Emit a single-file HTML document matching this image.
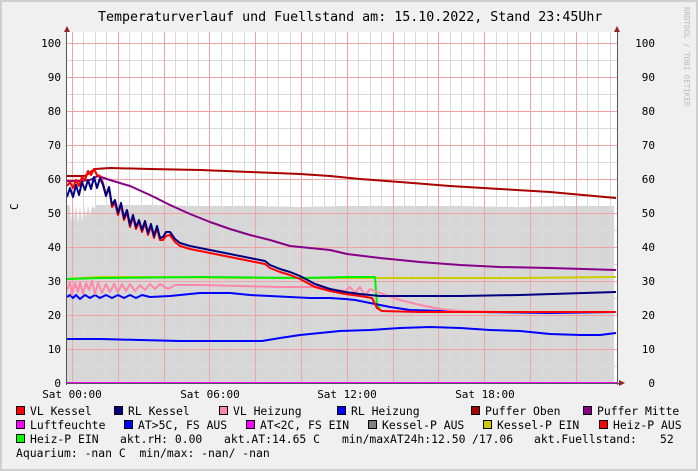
<!DOCTYPE html>
<html><head><meta charset="utf-8"><style>
html,body{margin:0;padding:0;background:#f0f0f0;}
svg{display:block;}
text{font-family:"DejaVu Sans Mono","Liberation Mono",monospace;white-space:pre;}
</style></head><body>
<svg width="698" height="471" viewBox="0 0 698 471" xmlns="http://www.w3.org/2000/svg">
<rect x="0" y="0" width="698" height="471" fill="#cfcfcf"/>
<rect x="2" y="2" width="694" height="467" fill="#f0f0f0"/>
<rect x="67" y="32" width="550" height="351" fill="#fff"/>
<path d="M67,383 L67,205 L70,205 L71,222 L73,205 L74,220 L76,205 L78,224 L80,206 L82,222 L84,204 L86,218 L88,205 L90,216 L92,206 L94,208 L96,205 L150,205 L200,206 L260,206 L300,207 L340,206 L400,206 L460,206 L520,207 L560,206 L614,206 L614,383 Z" fill="#d7d7d7"/>
<g stroke="#dadada" stroke-width="1" shape-rendering="crispEdges">
<path d="M83.5,32V383M95.5,32V383M106.5,32V383M129.5,32V383M141.5,32V383M152.5,32V383M175.5,32V383M187.5,32V383M198.5,32V383M221.5,32V383M232.5,32V383M244.5,32V383M267.5,32V383M278.5,32V383M290.5,32V383M312.5,32V383M324.5,32V383M335.5,32V383M358.5,32V383M370.5,32V383M381.5,32V383M404.5,32V383M415.5,32V383M427.5,32V383M450.5,32V383M461.5,32V383M473.5,32V383M496.5,32V383M507.5,32V383M518.5,32V383M541.5,32V383M553.5,32V383M564.5,32V383M587.5,32V383M598.5,32V383M610.5,32V383"/>
<path d="M67,60.5H617M67,94.5H617M67,128.5H617M67,162.5H617M67,196.5H617M67,230.5H617M67,264.5H617M67,298.5H617M67,332.5H617M67,366.5H617"/>
</g>
<g stroke="#f2a4a4" stroke-width="1" shape-rendering="crispEdges">
<path d="M72.5,32V383M118.5,32V383M164.5,32V383M209.5,32V383M255.5,32V383M301.5,32V383M347.5,32V383M393.5,32V383M438.5,32V383M484.5,32V383M530.5,32V383M576.5,32V383"/>
<path d="M67,43.5H617M67,77.5H617M67,111.5H617M67,145.5H617M67,179.5H617M67,213.5H617M67,247.5H617M67,281.5H617M67,315.5H617M67,349.5H617"/>
</g>
<g fill="none" stroke-width="2" stroke-linejoin="round">
<polyline stroke="#0000ff" points="67,339 100,339 140,340 180,341 220,341 262,341 280,338 300,335 320,333 340,331 370,330 400,328 430,327 460,328 490,330 520,331 550,334 580,335 600,335 616,333"/>
<polyline stroke="#cccc00" points="67,279 100,277 150,277 250,278 350,278 450,278 520,278 616,277"/>
<polyline stroke="#00ee00" points="67,279 100,278 200,277 300,278 350,277 375,277 377,306 380,308"/>
<polyline stroke="#0000ff" points="67,297 70,295 73,298 76,295 80,299 85,295 90,298 95,295 100,298 106,295 112,298 118,295 124,298 130,295 136,298 142,295 150,297 170,296 200,293 230,293 250,295 270,296 290,297 310,298 330,298 345,299 355,300 370,303 390,307 410,310 440,311 480,312 550,313 616,312"/>
<polyline stroke="#ff88aa" points="67,290 70,282 72,295 75,283 78,292 80,282 83,294 86,283 89,290 92,281 95,294 98,283 102,293 106,284 110,292 114,284 118,292 122,284 126,291 130,284 135,291 140,285 145,290 150,284 155,289 160,284 168,289 175,285 200,285 240,286 280,287 320,287 335,290 345,291 350,287 355,293 360,287 365,296 370,289 380,293 400,300 420,305 440,309 460,311 500,312 616,312"/>
<polyline stroke="#880088" points="67,181 80,181 90,180 98,176 110,180 130,186 150,195 170,205 190,214 210,222 230,229 250,235 270,240 290,246 310,248 330,250 347,254 380,258 420,262 460,265 500,267 550,268 616,270"/>
<polyline stroke="#aa0000" points="67,176 85,176 95,169 110,168 150,169 200,170 250,172 300,174 330,176 360,179 400,182 450,186 500,189 550,192 616,198"/>
<polyline stroke="#ff0000" points="67,186 70,182 73,188 76,180 79,186 82,177 85,180 88,171 91,175 94,169 97,175 100,176 103,183 106,195 109,188 112,207 115,203 118,215 121,205 124,220 127,212 130,227 133,217 136,229 139,222 142,232 145,223 148,235 151,226 154,238 157,228 160,240 163,240 166,236 170,235 175,242 180,246 190,249 200,251 215,254 230,257 245,260 255,262 265,264 270,268 280,272 290,275 300,279 315,287 330,291 345,294 360,296 372,298 377,308 382,311 420,312 500,312 616,312"/>
<polyline stroke="#000080" points="67,197 70,188 73,197 76,185 79,195 82,182 85,190 88,180 91,189 94,177 97,188 100,178 103,185 106,196 109,187 112,205 115,200 118,213 121,203 124,218 127,210 130,225 133,215 136,227 139,220 142,230 145,221 148,233 151,224 154,236 157,226 160,238 163,237 166,232 170,232 175,239 180,243 190,246 200,248 215,251 230,254 245,257 255,259 265,261 270,265 280,269 290,272 300,276 315,284 330,289 345,292 360,294 380,296 420,296 460,296 520,295 616,292"/>
</g>
<rect x="67" y="382" width="550" height="2" fill="#ff00ff"/>
<rect x="66" y="30" width="1" height="355" fill="#555"/>
<rect x="617" y="30" width="1" height="355" fill="#555"/>
<rect x="66" y="383" width="555" height="1" fill="#555"/>
<polygon points="67,26 64,32 70,32" fill="#992222"/>
<polygon points="617,26 614,32 620,32" fill="#992222"/>
<polygon points="625,383 619,380 619,386" fill="#992222"/>
<text x="98" y="21" font-size="13.3" fill="#000">Temperaturverlauf und Fuellstand am: 15.10.2022, Stand 23:45Uhr</text>
<text transform="translate(684,7) rotate(90)" font-size="7.5" fill="#bbb">RRDTOOL / TOBI OETIKER</text>
<text transform="translate(18,210) rotate(-90)" font-size="11" fill="#000">C</text>
<g font-size="11" fill="#000" text-anchor="end">
<text x="61" y="47">100</text><text x="61" y="81">90</text><text x="61" y="115">80</text><text x="61" y="149">70</text><text x="61" y="183">60</text><text x="61" y="217">50</text><text x="61" y="251">40</text><text x="61" y="285">30</text><text x="61" y="319">20</text><text x="61" y="353">10</text><text x="61" y="387">0</text>
<text x="655" y="47">100</text><text x="655" y="81">90</text><text x="655" y="115">80</text><text x="655" y="149">70</text><text x="655" y="183">60</text><text x="655" y="217">50</text><text x="655" y="251">40</text><text x="655" y="285">30</text><text x="655" y="319">20</text><text x="655" y="353">10</text><text x="655" y="387">0</text>
</g>
<g font-size="11" fill="#000" text-anchor="middle">
<text x="72" y="398">Sat 00:00</text><text x="210" y="398">Sat 06:00</text><text x="347" y="398">Sat 12:00</text><text x="485" y="398">Sat 18:00</text>
</g>
<g stroke="#000" stroke-width="1">
<rect x="16.5" y="406.5" width="8" height="8" fill="#ff0000"/>
<rect x="114.5" y="406.5" width="8" height="8" fill="#000080"/>
<rect x="219.5" y="406.5" width="8" height="8" fill="#ff88aa"/>
<rect x="337.5" y="406.5" width="8" height="8" fill="#0000ff"/>
<rect x="471.5" y="406.5" width="8" height="8" fill="#aa0000"/>
<rect x="583.5" y="406.5" width="8" height="8" fill="#880088"/>
<rect x="16.5" y="420.5" width="8" height="8" fill="#ff00ff"/>
<rect x="124.5" y="420.5" width="8" height="8" fill="#0000ff"/>
<rect x="246.5" y="420.5" width="8" height="8" fill="#ff00ff"/>
<rect x="368.5" y="420.5" width="8" height="8" fill="#808080"/>
<rect x="483.5" y="420.5" width="8" height="8" fill="#cccc00"/>
<rect x="599.5" y="420.5" width="8" height="8" fill="#ff0000"/>
<rect x="16.5" y="434.5" width="8" height="8" fill="#00ff00"/>
</g>
<g font-size="11.4" fill="#000">
<text x="30" y="415">VL Kessel</text><text x="128" y="415">RL Kessel</text><text x="233" y="415">VL Heizung</text><text x="351" y="415">RL Heizung</text><text x="485" y="415">Puffer Oben</text><text x="597" y="415">Puffer Mitte</text>
<text x="30" y="429">Luftfeuchte</text><text x="138" y="429">AT&gt;5C, FS AUS</text><text x="260" y="429">AT&lt;2C, FS EIN</text><text x="382" y="429">Kessel-P AUS</text><text x="497" y="429">Kessel-P EIN</text><text x="613" y="429">Heiz-P AUS</text>
<text x="30" y="443">Heiz-P EIN</text><text x="120" y="443">akt.rH: 0.00</text><text x="224" y="443">akt.AT:14.65 C</text><text x="342" y="443">min/maxAT24h:12.50</text><text x="472" y="443">/17.06</text><text x="534" y="443">akt.Fuellstand:</text><text x="660" y="443">52</text>
<text x="16" y="457">Aquarium: -nan C  min/max: -nan/ -nan</text>
</g>
</svg>
</body></html>
